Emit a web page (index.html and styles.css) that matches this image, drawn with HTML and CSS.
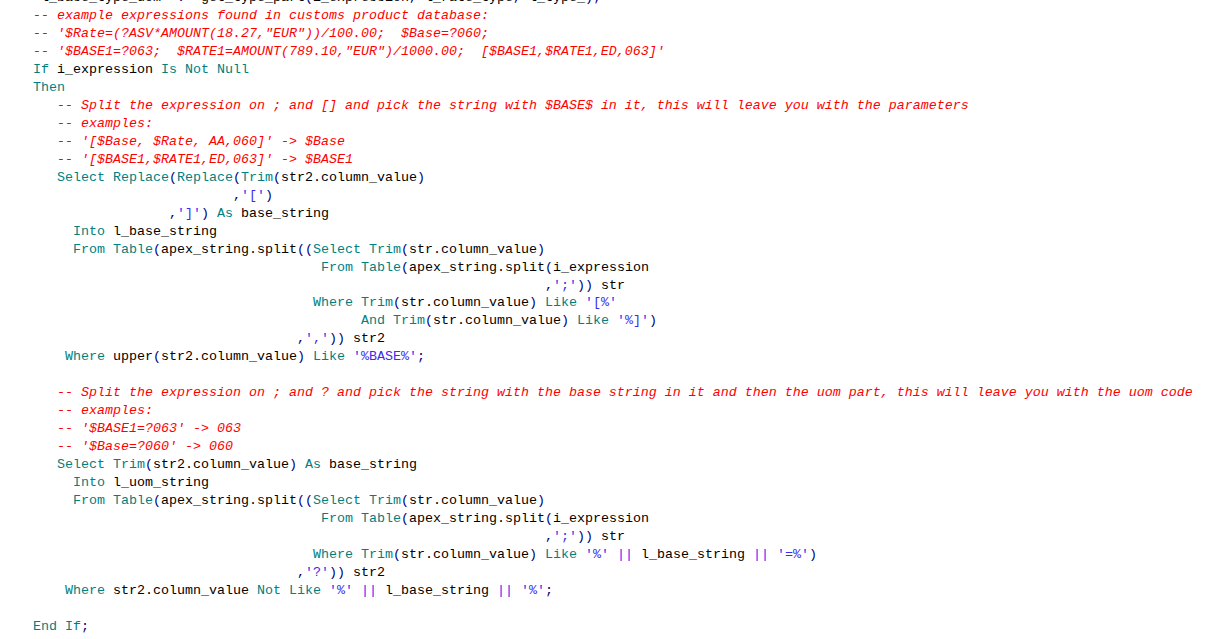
FILE: index.html
```html
<!DOCTYPE html>
<html lang="en">
<head>
<meta charset="utf-8">
<title>PL/SQL editor</title>
<link rel="stylesheet" href="styles.css">
</head>
<body>
<main class="editor">
<pre class="code"> l_base_type_uom  <span class="p">:=</span> get_type_part<span class="p">(</span>i_expression<span class="p">,</span> l_rate_type<span class="p">,</span> l_type_<span class="p">)</span><span class="p">;</span>
<span class="c">-- example expressions found in customs product database:</span>
<span class="c">-- '$Rate=(?ASV*AMOUNT(18.27,"EUR"))/100.00;  $Base=?060;</span>
<span class="c">-- '$BASE1=?063;  $RATE1=AMOUNT(789.10,"EUR")/1000.00;  [$BASE1,$RATE1,ED,063]'</span>
<span class="k">If</span> i_expression <span class="k">Is Not Null</span>
<span class="k">Then</span>
   <span class="c">-- Split the expression on ; and [] and pick the string with $BASE$ in it, this will leave you with the parameters</span>
   <span class="c">-- examples:</span>
   <span class="c">-- '[$Base, $Rate, AA,060]' -&gt; $Base</span>
   <span class="c">-- '[$BASE1,$RATE1,ED,063]' -&gt; $BASE1</span>
   <span class="k">Select Replace</span><span class="p">(</span><span class="k">Replace</span><span class="p">(</span><span class="k">Trim</span><span class="p">(</span>str2.column_value<span class="p">)</span>
                         <span class="p">,</span><span class="s">'['</span><span class="p">)</span>
                 <span class="p">,</span><span class="s">']'</span><span class="p">)</span> <span class="k">As</span> base_string
     <span class="k">Into</span> l_base_string
     <span class="k">From Table</span><span class="p">(</span>apex_string.split<span class="p">((</span><span class="k">Select Trim</span><span class="p">(</span>str.column_value<span class="p">)</span>
                                    <span class="k">From Table</span><span class="p">(</span>apex_string.split<span class="p">(</span>i_expression
                                                                <span class="p">,</span><span class="s">';'</span><span class="p">))</span> str
                                   <span class="k">Where Trim</span><span class="p">(</span>str.column_value<span class="p">)</span> <span class="k">Like</span> <span class="s">'[%'</span>
                                         <span class="k">And Trim</span><span class="p">(</span>str.column_value<span class="p">)</span> <span class="k">Like</span> <span class="s">'%]'</span><span class="p">)</span>
                                 <span class="p">,</span><span class="s">','</span><span class="p">))</span> str2
    <span class="k">Where</span> upper<span class="p">(</span>str2.column_value<span class="p">)</span> <span class="k">Like</span> <span class="s">'%BASE%'</span><span class="p">;</span>

   <span class="c">-- Split the expression on ; and ? and pick the string with the base string in it and then the uom part, this will leave you with the uom code</span>
   <span class="c">-- examples:</span>
   <span class="c">-- '$BASE1=?063' -&gt; 063</span>
   <span class="c">-- '$Base=?060' -&gt; 060</span>
   <span class="k">Select Trim</span><span class="p">(</span>str2.column_value<span class="p">)</span> <span class="k">As</span> base_string
     <span class="k">Into</span> l_uom_string
     <span class="k">From Table</span><span class="p">(</span>apex_string.split<span class="p">((</span><span class="k">Select Trim</span><span class="p">(</span>str.column_value<span class="p">)</span>
                                    <span class="k">From Table</span><span class="p">(</span>apex_string.split<span class="p">(</span>i_expression
                                                                <span class="p">,</span><span class="s">';'</span><span class="p">))</span> str
                                   <span class="k">Where Trim</span><span class="p">(</span>str.column_value<span class="p">)</span> <span class="k">Like</span> <span class="s">'%'</span> <span class="o">||</span> l_base_string <span class="o">||</span> <span class="s">'=%'</span><span class="p">)</span>
                                 <span class="p">,</span><span class="s">'?'</span><span class="p">))</span> str2
    <span class="k">Where</span> str2.column_value <span class="k">Not Like</span> <span class="s">'%'</span> <span class="o">||</span> l_base_string <span class="o">||</span> <span class="s">'%'</span><span class="p">;</span>

<span class="k">End If</span><span class="p">;</span>
</pre>
</main>
</body>
</html>
```
FILE: styles.css
```css
html, body {
  margin: 0;
  padding: 0;
  background: #ffffff;
}

.editor {
  width: 1215px;
  height: 639px;
  overflow: hidden;
  background: #ffffff;
}

.code {
  margin: -11px 0 0 0;
  padding: 0 0 0 33px;
  font-family: "Liberation Mono", "Courier New", monospace;
  font-size: 13.333px;
  line-height: 17.97px;
  color: #000000;
  white-space: pre;
}

.c {
  color: #ff0000;
  font-style: italic;
}

.k {
  color: #008080;
}

.s {
  color: #3a2cf0;
}

.o {
  color: #3a2cf0;
}

.p {
  color: #000080;
}
```
